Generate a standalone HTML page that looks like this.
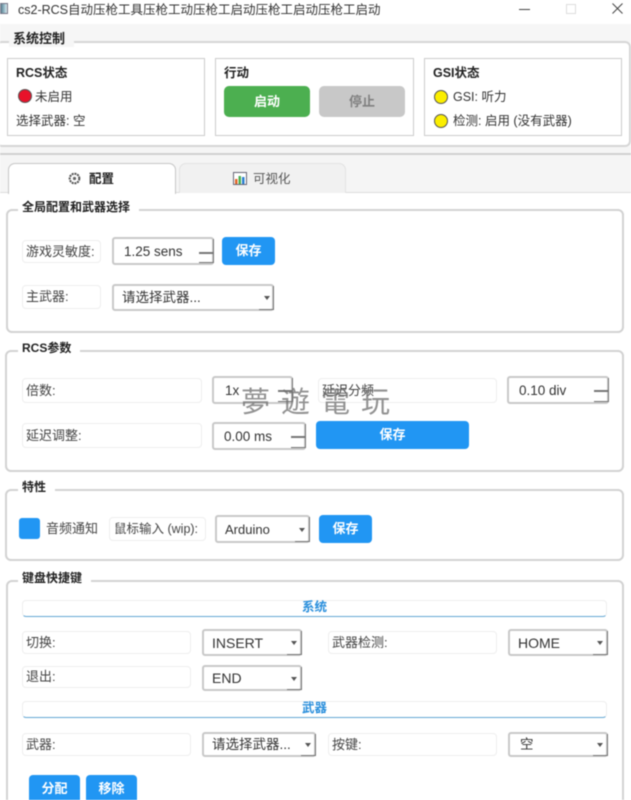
<!DOCTYPE html>
<html lang="zh">
<head>
<meta charset="utf-8">
<style>
html,body{margin:0;padding:0;background:#fff}
#r{position:relative;width:631px;height:800px;overflow:hidden;background:#fff;font-family:"Liberation Sans","Noto Sans CJK SC",sans-serif;font-size:13px;color:#333;filter:blur(.5px)}
#r div,#r span.a{position:absolute;box-sizing:border-box;white-space:nowrap}
.t{line-height:20px;height:20px}
.b{font-weight:bold;color:#222}
.panel{background:#fff;border:1px solid #ccc}
.grp{border:2px solid #d2d2d2;border-radius:6px;background:#fff}
.gt{background:#fff;font-weight:bold;font-size:12px;line-height:16px;height:16px;padding:0 9px 0 4px;color:#222}
.lb{background:#fff;border:1px solid #eee;border-radius:4px;font-size:13px;color:#444;padding-left:3px}
.btn{background:#2196f3;color:#fff;font-weight:bold;font-size:13px;border-radius:4px;text-align:center}
.in{background:#fff;border:2px solid #c8c8c8;border-radius:3px;font-size:13.5px;color:#333;padding-left:10px}
.cb{padding-left:8px}
.v{width:1.5px;background:#777;right:-2px;top:0;bottom:0}
.h{height:1.5px;background:#777;right:-2px;width:15px}
.ar{width:0;height:0;border-left:3.5px solid transparent;border-right:3.5px solid transparent;border-top:4px solid #555}
.hd{background:#fff;border:1px solid #eee;border-bottom:1.5px solid #64a8d4;border-radius:4px;color:#2a8fdc;font-weight:bold;font-size:12.5px;text-align:center;left:22px;width:585px;height:17px;line-height:13px}
.dot{width:14px;height:14px;border-radius:50%;border:1px solid #555}
</style>
</head>
<body>
<div id="r">
<!-- title bar -->
<div style="left:0;top:0;width:631px;height:24px;background:#fff"></div>
<div style="left:0;top:3px;width:8px;height:11px;background:linear-gradient(90deg,#5a7f8f,#9fc3cf 60%,#dfe9ec);border:1px solid #778"></div>
<div class="t" style="left:18px;top:0;width:362px;overflow:hidden;font-size:12.5px;color:#333">cs2-RCS自动压枪工具压枪工动压枪工启动压枪工启动压枪工启动压枪</div>
<div style="left:519px;top:9px;width:11px;height:1px;background:#444"></div>
<div style="left:566px;top:4px;width:10px;height:10px;border:1px solid #ddd"></div>
<svg style="position:absolute;left:612px;top:3px" width="11" height="11" viewBox="0 0 11 11"><path d="M.5.5l10 10M10.5.5l-10 10" stroke="#444" stroke-width="1" fill="none"/></svg>
<!-- system section bg -->
<div style="left:0;top:24px;width:631px;height:124px;background:#f6f6f6"></div>
<div style="left:-4px;top:41px;width:635px;height:106px;background:#fff;border:2px solid #d6d6d6;border-radius:6px"></div>
<div class="gt" style="left:9px;top:31px;background:#f6f6f6;font-size:13px;height:16px">系统控制</div>
<div class="panel" style="left:7px;top:58px;width:198px;height:78px"></div>
<div class="panel" style="left:215px;top:58px;width:199px;height:78px"></div>
<div class="panel" style="left:424px;top:58px;width:198px;height:78px"></div>
<div class="t b" style="left:16px;top:63px;font-size:12.5px">RCS状态</div>
<div class="dot" style="left:18px;top:89px;background:#e8122a"></div>
<div class="t" style="left:35px;top:87px;font-size:12.5px">未启用</div>
<div class="t" style="left:16px;top:111px;font-size:12.5px">选择武器: 空</div>
<div class="t b" style="left:224px;top:63px;font-size:12.5px">行动</div>
<div class="btn" style="left:224px;top:86px;width:86px;height:31px;line-height:32px;background:#4caf50;border-radius:5px;font-size:13px">启动</div>
<div class="btn" style="left:319px;top:86px;width:86px;height:31px;line-height:32px;background:#c8c8c8;color:#808080;border-radius:5px;font-size:13px">停止</div>
<div class="t b" style="left:433px;top:63px;font-size:12.5px">GSI状态</div>
<div class="dot" style="left:434px;top:90px;background:#fbee00"></div>
<div class="t" style="left:453px;top:87px;font-size:12.5px">GSI: 听力</div>
<div class="dot" style="left:434px;top:114px;background:#fbee00"></div>
<div class="t" style="left:453px;top:111px;font-size:12.5px">检测: 启用 (没有武器)</div>
<!-- tab area -->
<div style="left:0;top:147px;width:631px;height:45px;background:#f5f5f5"></div>
<div style="left:0;top:153px;width:631px;height:2px;background:#d0d0d0"></div>
<div style="left:0;top:192px;width:631px;height:1px;background:#ddd"></div>
<div style="left:179px;top:163px;width:167px;height:30px;background:#f1f1f1;border:1px solid #e2e2e2;border-bottom:0;border-radius:7px 7px 0 0"></div>
<div style="left:8px;top:163px;width:168px;height:31px;background:#fff;border:1px solid #c6c6c6;border-bottom:0;border-radius:7px 7px 0 0"></div>
<svg style="position:absolute;left:68px;top:172px" width="13" height="13" viewBox="0 0 13 13"><circle cx="6.5" cy="6.5" r="4.8" fill="none" stroke="#555" stroke-width="2" stroke-dasharray="2 .8"/><circle cx="6.5" cy="6.5" r="1.6" fill="#666"/></svg>
<div class="t b" style="left:89px;top:169px;font-size:12.5px">配置</div>
<svg style="position:absolute;left:233px;top:172px" width="14" height="13" viewBox="0 0 14 13"><rect x=".5" y=".5" width="13" height="12" fill="#fff" stroke="#667"/><rect x="2" y="7" width="2.5" height="5" fill="#e0662a"/><rect x="5.5" y="4" width="2.5" height="8" fill="#4caf50"/><rect x="9" y="5" width="2.5" height="7" fill="#2a7fd0"/></svg>
<div class="t" style="left:253px;top:169px;font-size:12.5px;color:#555">可视化</div>
<!-- group 1 -->
<div class="grp" style="left:6px;top:209px;width:618px;height:124px"></div>
<div class="gt" style="left:18px;top:199px">全局配置和武器选择</div>
<div class="lb t" style="left:22px;top:240px;width:79px;height:23px;line-height:21px;">游戏灵敏度:</div>
<div class="in" style="left:112px;top:237px;width:102px;height:28px;line-height:25px">1.25 sens<div class="v"></div><div class="h" style="top:13px"></div><div class="h" style="bottom:0"></div></div>
<div class="btn" style="left:222px;top:237px;width:53px;height:28px;line-height:28px">保存</div>
<div class="lb t" style="left:22px;top:285px;width:79px;height:24px;line-height:22px">主武器:</div>
<div class="in cb" style="left:112px;top:284px;width:162px;height:27px;line-height:24px">请选择武器...<div class="v"></div><div class="h" style="bottom:-1px"></div><div class="ar" style="right:2px;top:10px"></div></div>
<!-- RCS -->
<div class="grp" style="left:5px;top:350px;width:619px;height:122px"></div>
<div class="gt" style="left:18px;top:340px">RCS参数</div>
<div class="lb" style="left:22px;top:378px;width:180px;height:25px;line-height:23px">倍数:</div>
<div class="in" style="left:212px;top:376px;width:81px;height:28px;line-height:25px;padding-left:11px">1x<div class="v"></div><div class="h" style="top:12px"></div><div class="h" style="bottom:0"></div></div>
<div class="lb" style="left:318px;top:378px;width:179px;height:25px;line-height:23px">延迟分频</div>
<div class="in" style="left:507px;top:376px;width:102px;height:28px;line-height:25px">0.10 div<div class="v"></div><div class="h" style="top:12px"></div><div class="h" style="bottom:0"></div></div>
<div class="lb" style="left:22px;top:423px;width:180px;height:25px;line-height:23px">延迟调整:</div>
<div class="in" style="left:212px;top:422px;width:94px;height:28px;line-height:25px">0.00 ms<div class="v"></div><div class="h" style="top:12px"></div><div class="h" style="bottom:0"></div></div>
<div class="btn" style="left:316px;top:421px;width:153px;height:28px;line-height:28px">保存</div>
<!-- features -->
<div class="grp" style="left:5px;top:489px;width:619px;height:72px"></div>
<div class="gt" style="left:18px;top:479px">特性</div>
<div style="left:19px;top:518px;width:21px;height:21px;background:#2196f3;border-radius:3px"></div>
<div class="t" style="left:46px;top:519px;font-size:13px;color:#444">音频通知</div>
<div class="lb" style="left:109px;top:517px;width:97px;height:24px;line-height:22px;padding-left:4px;font-size:12.5px">鼠标输入 (wip):</div>
<div class="in cb" style="left:215px;top:515px;width:95px;height:28px;line-height:25px;font-size:13px">Arduino<div class="v"></div><div class="h" style="bottom:-1px"></div><div class="ar" style="right:3px;top:11px"></div></div>
<div class="btn" style="left:319px;top:515px;width:53px;height:28px;line-height:28px">保存</div>
<!-- keyboard -->
<div class="grp" style="left:6px;top:580px;width:618px;height:240px"></div>
<div class="gt" style="left:18px;top:570px">键盘快捷键</div>
<div class="hd" style="top:600px">系统</div>
<div class="lb" style="left:22px;top:631px;width:169px;height:23px;line-height:21px">切换:</div>
<div class="in cb" style="left:202px;top:629px;width:100px;height:27px;line-height:24px;font-size:14px">INSERT<div class="v"></div><div class="h" style="bottom:-1px"></div><div class="ar" style="right:3px;top:10px"></div></div>
<div class="lb" style="left:328px;top:631px;width:169px;height:23px;line-height:21px">武器检测:</div>
<div class="in cb" style="left:508px;top:629px;width:100px;height:27px;line-height:24px;font-size:14px">HOME<div class="v"></div><div class="h" style="bottom:-1px"></div><div class="ar" style="right:3px;top:10px"></div></div>
<div class="lb" style="left:22px;top:666px;width:169px;height:22px;line-height:20px">退出:</div>
<div class="in cb" style="left:202px;top:665px;width:100px;height:26px;line-height:23px;font-size:14px">END<div class="v"></div><div class="h" style="bottom:-1px"></div><div class="ar" style="right:3px;top:10px"></div></div>
<div class="hd" style="top:701px">武器</div>
<div class="lb" style="left:22px;top:733px;width:169px;height:23px;line-height:21px">武器:</div>
<div class="in cb" style="left:202px;top:732px;width:114px;height:25px;line-height:22px">请选择武器...<div class="v"></div><div class="h" style="bottom:-1px"></div><div class="ar" style="right:3px;top:9px"></div></div>
<div class="lb" style="left:328px;top:733px;width:169px;height:23px;line-height:21px">按键:</div>
<div class="in" style="left:508px;top:732px;width:100px;height:25px;line-height:22px">空<div class="v"></div><div class="h" style="bottom:-1px"></div><div class="ar" style="right:3px;top:9px"></div></div>
<div class="btn" style="left:29px;top:775px;width:51px;height:30px;line-height:28px">分配</div>
<div class="btn" style="left:86px;top:775px;width:51px;height:30px;line-height:28px">移除</div>
<!-- watermark -->
<div style="left:241px;top:384px;font-size:29px;line-height:32px;letter-spacing:11px;color:rgba(110,110,110,.75);font-family:'Noto Sans CJK TC','Liberation Sans',sans-serif">夢遊電玩</div>
</div>
</body>
</html>
